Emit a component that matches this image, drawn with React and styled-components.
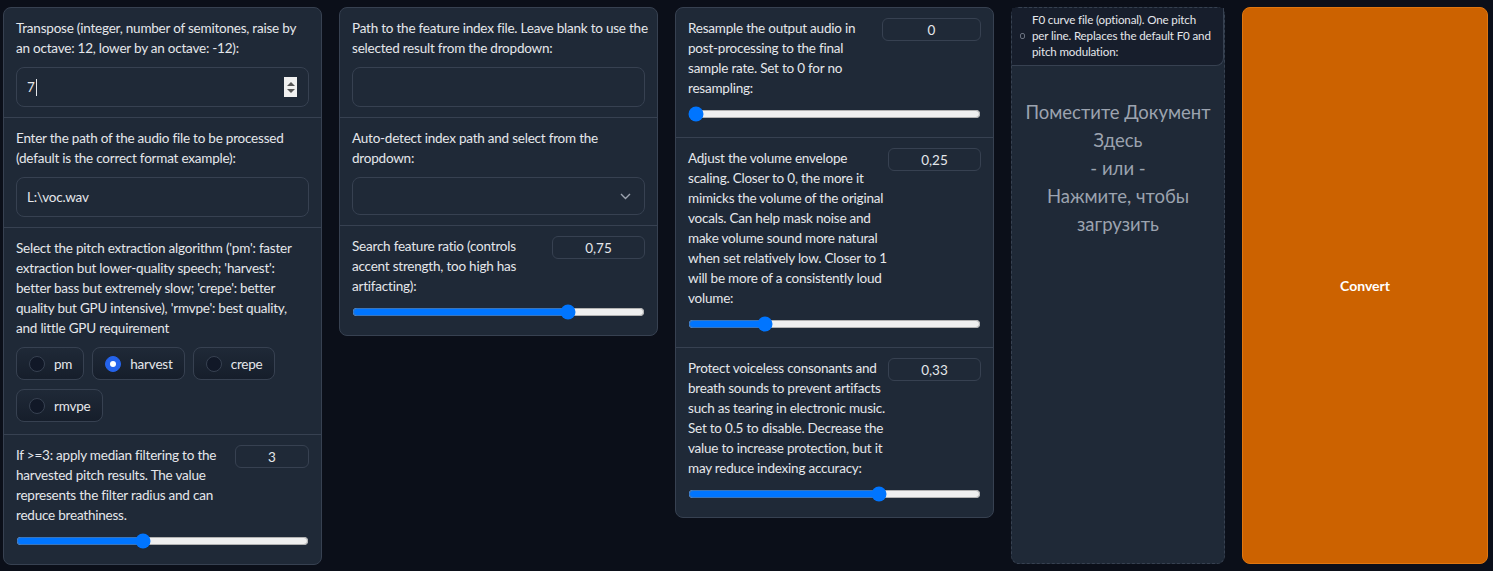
import React from 'react'
import styled, { createGlobalStyle } from 'styled-components'

const GlobalStyle = createGlobalStyle`
  html, body {
    margin: 0;
    background: #0b0f19;
    font-family: Lato, 'Noto Sans', sans-serif;
    color: #e5e7eb;
  }
`

const Page = styled.div`
  display: grid;
  grid-template-columns: 319px 319px 319px 214px 246px;
  column-gap: 17px;
  align-items: start;
  padding: 7px 0 0 3px;
  height: 571px;
  box-sizing: border-box;
  overflow: hidden;
`

const Panel = styled.div`
  background: #1f2937;
  border: 1px solid #374151;
  border-radius: 8px;
  overflow: hidden;
  box-sizing: border-box;
`

const Section = styled.div`
  padding: 10px 12px ${p => (p.$slider ? '15px' : '10px')};
  & + & {
    border-top: 1px solid #374151;
  }
`

const Label = styled.div`
  flex: 1;
  min-width: 0;
  font-size: 13.5px;
  letter-spacing: -0.22px;
  line-height: 20px;
  color: #e5e7eb;
  white-space: nowrap;
`

const HeadRow = styled.div`
  display: flex;
  justify-content: space-between;
  align-items: flex-start;
`

const TextBox = styled.div`
  height: 40px;
  margin-top: 9px;
  border: 1px solid #374151;
  border-radius: 8px;
  padding: 0 10px;
  display: flex;
  align-items: center;
  font-size: 13.5px;
  letter-spacing: -0.2px;
  box-sizing: border-box;
  position: relative;
`

const Caret = styled.span`
  display: inline-block;
  width: 1px;
  height: 17px;
  background: #e5e7eb;
  margin-left: 1px;
`

const Spinner = styled.span`
  position: absolute;
  right: 11px;
  top: 9px;
  width: 13px;
  height: 20px;
  background: #f0f0f0;
  display: flex;
  flex-direction: column;
  align-items: center;
  justify-content: center;
  gap: 3px;
`

const Tri = styled.span`
  width: 0;
  height: 0;
  border-left: 4px solid transparent;
  border-right: 4px solid transparent;
  ${p => (p.$down ? 'border-top: 4px solid #555;' : 'border-bottom: 4px solid #555;')}
`

const Dropdown = styled(TextBox)`
  height: 38px;
  justify-content: flex-end;
  padding-right: 13px;
  margin-top: 9px;
`

const NumBox = styled.div`
  width: ${p => p.$w}px;
  height: 23px;
  flex-shrink: 0;
  border: 1px solid #374151;
  border-radius: 6px;
  display: flex;
  align-items: center;
  justify-content: center;
  font-size: 13.5px;
  box-sizing: border-box;
`

const Slider = styled.input.attrs({ type: 'range' })`
  display: block;
  width: 100%;
  height: 16px;
  margin: 8px 0 0;
`

const RadioGroup = styled.div`
  display: flex;
  flex-wrap: wrap;
  gap: 9px 8px;
  margin: 9px 0 2px;
`

const RadioItem = styled.label`
  display: flex;
  align-items: center;
  gap: 9px;
  height: 33px;
  padding: 0 11px 0 12px;
  border: 1px solid #374151;
  border-radius: 8px;
  background: linear-gradient(to bottom, #1f2937, #161e2b);
  font-size: 13.5px;
  letter-spacing: -0.2px;
  box-sizing: border-box;
`

const Dot = styled.span`
  width: 16px;
  height: 16px;
  border-radius: 50%;
  box-sizing: border-box;
  display: flex;
  align-items: center;
  justify-content: center;
  background: ${p => (p.$on ? '#2563eb' : '#111827')};
  border: 1px solid ${p => (p.$on ? '#2563eb' : '#374151')};
  &::after {
    content: '';
    width: 6px;
    height: 6px;
    border-radius: 50%;
    background: ${p => (p.$on ? '#fff' : 'transparent')};
  }
`

const FileBox = styled.div`
  height: 557px;
  border: 1px dashed #374151;
  border-radius: 8px;
  background: #1f2937;
  box-sizing: border-box;
  display: flex;
  flex-direction: column;
`

const FileLabel = styled.div`
  display: flex;
  align-items: center;
  gap: 7px;
  padding: 4px 8px 5px 8px;
  background: #171e2c;
  border-bottom: 1px solid #374151;
  border-right: 1px solid #374151;
  border-bottom-right-radius: 8px;
  font-size: 11.6px;
  letter-spacing: -0.15px;
  line-height: 16px;
  color: #e5e7eb;
  white-space: nowrap;
`

const FileIcon = styled.svg`
  flex-shrink: 0;
  display: block;
`

const DropText = styled.div`
  margin-top: 32px;
  text-align: center;
  font-size: 18.5px;
  line-height: 28px;
  color: #9ca3af;
`

const ConvertButton = styled.button`
  height: 557px;
  width: 100%;
  background: #cc6200;
  border: 1px solid #e0760f;
  border-radius: 8px;
  color: #fff;
  font-family: inherit;
  font-weight: 700;
  font-size: 14px;
`

const Lines = ({ lines }) => (
  <Label>
    {lines.map((l, i) => (
      <React.Fragment key={i}>
        {l}
        {i < lines.length - 1 && <br />}
      </React.Fragment>
    ))}
  </Label>
)

const SliderField = ({ lines, value, width, pos }) => (
  <Section $slider>
    <HeadRow>
      <Lines lines={lines} />
      <NumBox $w={width}>{value}</NumBox>
    </HeadRow>
    <Slider defaultValue={pos} min={0} max={100} step={0.1} />
  </Section>
)

const algorithms = ['pm', 'harvest', 'crepe', 'rmvpe']

export default function App() {
  return (
    <>
      <GlobalStyle />
      <Page>
        <Panel>
          <Section>
            <Lines lines={['Transpose (integer, number of semitones, raise by', 'an octave: 12, lower by an octave: -12):']} />
            <TextBox>
              7<Caret />
              <Spinner>
                <Tri />
                <Tri $down />
              </Spinner>
            </TextBox>
          </Section>
          <Section>
            <Lines lines={['Enter the path of the audio file to be processed', '(default is the correct format example):']} />
            <TextBox>L:\voc.wav</TextBox>
          </Section>
          <Section>
            <Lines
              lines={[
                "Select the pitch extraction algorithm ('pm': faster",
                "extraction but lower-quality speech; 'harvest':",
                "better bass but extremely slow; 'crepe': better",
                "quality but GPU intensive), 'rmvpe': best quality,",
                'and little GPU requirement',
              ]}
            />
            <RadioGroup>
              {algorithms.map(a => (
                <RadioItem key={a}>
                  <Dot $on={a === 'harvest'} />
                  {a}
                </RadioItem>
              ))}
            </RadioGroup>
          </Section>
          <SliderField
            lines={['If >=3: apply median filtering to the', 'harvested pitch results. The value', 'represents the filter radius and can', 'reduce breathiness.']}
            value="3"
            width={74}
            pos={43}
          />
        </Panel>

        <Panel>
          <Section>
            <Lines lines={['Path to the feature index file. Leave blank to use the', 'selected result from the dropdown:']} />
            <TextBox />
          </Section>
          <Section>
            <Lines lines={['Auto-detect index path and select from the', 'dropdown:']} />
            <Dropdown>
              <svg width="11" height="7" viewBox="0 0 11 7">
                <path d="M1 1l4.5 4.5L10 1" fill="none" stroke="#9ca3af" strokeWidth="1.4" />
              </svg>
            </Dropdown>
          </Section>
          <SliderField
            lines={['Search feature ratio (controls', 'accent strength, too high has', 'artifacting):']}
            value="0,75"
            width={93}
            pos={75}
          />
        </Panel>

        <Panel>
          <SliderField
            lines={['Resample the output audio in', 'post-processing to the final', 'sample rate. Set to 0 for no', 'resampling:']}
            value="0"
            width={99}
            pos={0}
          />
          <SliderField
            lines={[
              'Adjust the volume envelope',
              'scaling. Closer to 0, the more it',
              'mimicks the volume of the original',
              'vocals. Can help mask noise and',
              'make volume sound more natural',
              'when set relatively low. Closer to 1',
              'will be more of a consistently loud',
              'volume:',
            ]}
            value="0,25"
            width={93}
            pos={25}
          />
          <SliderField
            lines={[
              'Protect voiceless consonants and',
              'breath sounds to prevent artifacts',
              'such as tearing in electronic music.',
              'Set to 0.5 to disable. Decrease the',
              'value to increase protection, but it',
              'may reduce indexing accuracy:',
            ]}
            value="0,33"
            width={93}
            pos={66}
          />
        </Panel>

        <FileBox>
          <FileLabel>
            <FileIcon width="5" height="6" viewBox="0 0 5 6">
              <rect x="0.5" y="0.5" width="4" height="5" rx="1.5" fill="none" stroke="#6b7280" />
            </FileIcon>
            <span>
              F0 curve file (optional). One pitch
              <br />
              per line. Replaces the default F0 and
              <br />
              pitch modulation:
            </span>
          </FileLabel>
          <DropText>
            Поместите Документ
            <br />
            Здесь
            <br />- или -
            <br />
            Нажмите, чтобы
            <br />
            загрузить
          </DropText>
        </FileBox>

        <ConvertButton>Convert</ConvertButton>
      </Page>
    </>
  )
}
